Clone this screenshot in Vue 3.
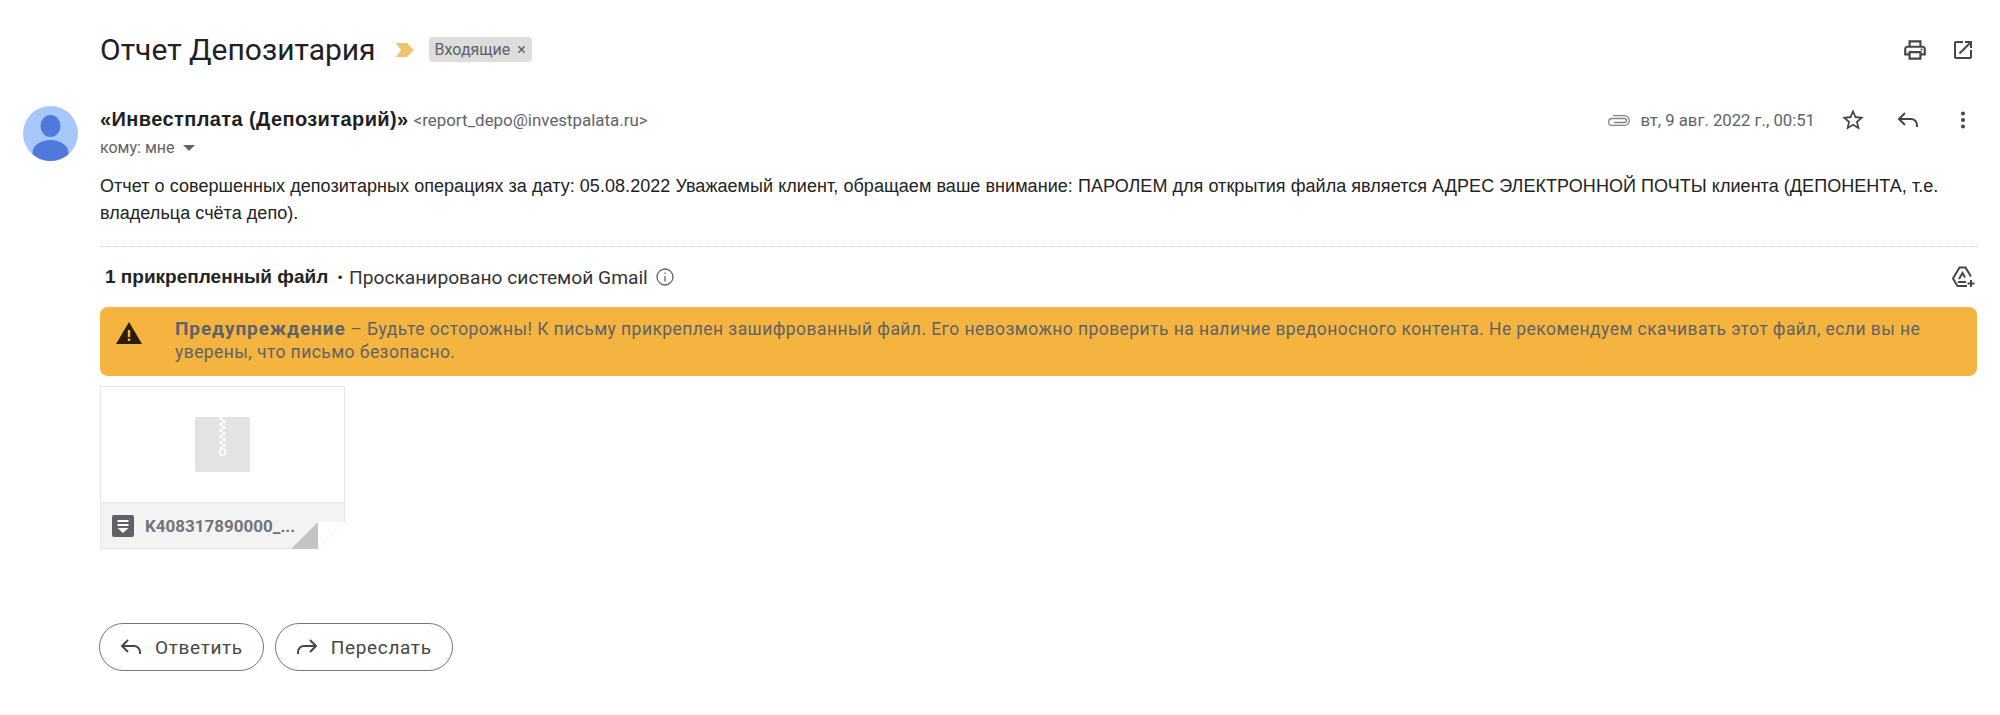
<script setup>
const emailBody = 'Отчет о совершенных депозитарных операциях за дату: 05.08.2022 Уважаемый клиент, обращаем ваше внимание: ПАРОЛЕМ для открытия файла является АДРЕС ЭЛЕКТРОННОЙ ПОЧТЫ клиента (ДЕПОНЕНТА, т.е. владельца счёта депо).'
const warning = ' – Будьте осторожны! К письму прикреплен зашифрованный файл. Его невозможно проверить на наличие вредоносного контента. Не рекомендуем скачивать этот файл, если вы не уверены, что письмо безопасно.'
</script>

<template>
  <div class="page">
    <div class="subjectRow">
      <h1 class="subject">Отчет Депозитария</h1>
      <svg class="marker" width="18" height="14" viewBox="0 0 18 14"><path d="M0 0h11l7 7-7 7H0l5-7z" fill="#f0c36d"/></svg>
      <span class="label">Входящие <span class="labelX">×</span></span>
      <div class="subjectIcons">
        <svg class="icon" width="26" height="26" viewBox="0 0 24 24"><path d="M19 8h-1V3H6v5H5c-1.66 0-3 1.34-3 3v6h4v4h12v-4h4v-6c0-1.66-1.34-3-3-3zM8 5h8v3H8V5zm8 12v2H8v-4h8v2zm2-2v-2H6v2H4v-4c0-.55.45-1 1-1h14c.55 0 1 .45 1 1v4h-2z"/><circle cx="18" cy="11.5" r="1"/></svg>
        <svg class="icon" width="24" height="24" viewBox="0 0 24 24"><path d="M19 19H5V5h7V3H5c-1.11 0-2 .9-2 2v14c0 1.1.89 2 2 2h14c1.1 0 2-.9 2-2v-7h-2v7zM14 3v2h3.59l-9.83 9.83 1.41 1.41L19 6.41V10h2V3h-7z"/></svg>
      </div>
    </div>

    <div class="message">
      <svg class="avatar" width="55" height="55" viewBox="0 0 55 55">
        <defs><clipPath id="avatarClip"><circle cx="27.5" cy="27.5" r="27.5"/></clipPath></defs>
        <circle cx="27.5" cy="27.5" r="27.5" fill="#a8c7fa"/>
        <g clip-path="url(#avatarClip)" fill="#4f79db">
          <ellipse cx="27.5" cy="20" rx="10" ry="11"/>
          <ellipse cx="27.5" cy="47" rx="18" ry="13"/>
        </g>
      </svg>
      <div class="messageMain">
        <div class="senderRow">
          <div class="senderInfo">
            <div class="senderLine"><b class="senderName">«Инвестплата (Депозитарий)»</b> <span class="senderMail">&lt;report_depo@investpalata.ru&gt;</span></div>
            <div class="toLine">кому: мне <span class="caret"></span></div>
          </div>
          <div class="meta">
            <svg class="clip" width="24" height="13" viewBox="0 0 24 13" fill="none" stroke="#80868b" stroke-width="1.300"><path d="M8 8.500h10.500a2 2 0 0 0 0-4H6a3.200 3.200 0 0 0 0 6.800h12.500a4.800 4.800 0 0 0 0-9.600H7"/></svg>
            <span class="date">вт, 9 авг. 2022 г., 00:51</span>
            <svg class="icon star" width="26" height="26" viewBox="0 0 24 24"><path d="M22 9.240l-7.190-.62L12 2 9.190 8.630 2 9.240l5.460 4.730L5.820 21 12 17.270 18.180 21l-1.630-7.030L22 9.240zM12 15.400l-3.760 2.270 1-4.280-3.320-2.880 4.380-.38L12 6.100l1.710 4.040 4.380.38-3.320 2.880 1 4.280L12 15.400z"/></svg>
            <svg class="replyIcon" width="22" height="16" viewBox="0 0 22 16" fill="none" stroke="#444746" stroke-width="2"><path d="M8 1L2 7l6 6M2 7h12a6 6 0 0 1 6 6v2"/></svg>
            <svg class="dots" width="6" height="18" viewBox="0 0 6 18" fill="#444746"><circle cx="3" cy="2.500" r="2"/><circle cx="3" cy="9" r="2"/><circle cx="3" cy="15.500" r="2"/></svg>
          </div>
        </div>
        <p class="body">{{ emailBody }}</p>
      </div>
    </div>

    <div class="attachments">
      <div class="attachHead">
        <span class="attachTitle">1 прикрепленный файл</span>
        <span class="attachDot">•</span>
        <span class="scanned">Просканировано системой Gmail</span>
        <svg class="info" width="20" height="20" viewBox="0 0 20 20" fill="none" stroke="#5f6368" stroke-width="1.300"><circle cx="10" cy="10" r="8"/><path d="M10 9v5.500"/><path d="M10 5.600v1.500"/></svg>
        <svg class="driveAdd" width="26" height="24" viewBox="0 0 26 24" fill="none" stroke="#444746" stroke-width="2"><path d="M16 21H6.500L2 13.500 8.500 2.500h6L20 11.500"/><path d="M7 17h8M8 14l3.500-6 2.500 4.500"/><path d="M20 15v7M16.500 18.500h7"/></svg>
      </div>

      <div class="warning">
        <svg class="warnIcon" width="26" height="22" viewBox="0 0 26 22"><path d="M13 0l13 22H0z" fill="#2b1d05"/><path d="M11.800 8h2.400v7h-2.400zM11.800 16.500h2.400V19h-2.400z" fill="#f4b43f"/></svg>
        <div class="warnText"><b>Предупреждение</b>{{ warning }}</div>
      </div>

      <div class="fileCard">
        <div class="filePreview">
          <svg width="55" height="55" viewBox="0 0 55 55">
            <rect width="55" height="55" rx="2" fill="#e3e3e3"/>
            <path d="M26 0v32" stroke="#fff" stroke-width="3" stroke-dasharray="3 3"/>
            <path d="M29 3v29" stroke="#fff" stroke-width="3" stroke-dasharray="3 3"/>
            <circle cx="27.500" cy="35" r="3" fill="none" stroke="#fff" stroke-width="1.500"/>
          </svg>
        </div>
        <div class="fileFooter">
          <svg class="fileIcon" width="22" height="22" viewBox="0 0 22 22">
            <rect width="22" height="22" rx="2" fill="#5f6368"/>
            <path d="M5.500 5h11v2h-11zM5.500 9h11v2h-11z" fill="#fff"/>
            <path d="M5.500 13h11L11 18z" fill="#fff"/>
          </svg>
          <span class="fileName">K408317890000_...</span>
        </div>
        <svg class="fold" width="54" height="27" viewBox="0 0 54 27">
          <path d="M0 27L27 0v27z" fill="#c4c4c4"/>
          <path d="M27 0h27v27H27z" fill="#fff"/>
          <path d="M54 0L27 27" stroke="#efefef" stroke-width="1"/>
        </svg>
      </div>
    </div>

    <div class="actions">
      <button class="actionBtn">
        <svg width="22" height="16" viewBox="0 0 22 16" fill="none" stroke="#444746" stroke-width="2"><path d="M8 1L2 7l6 6M2 7h12a6 6 0 0 1 6 6v2"/></svg>
        Ответить
      </button>
      <button class="actionBtn">
        <svg width="22" height="16" viewBox="0 0 22 16" fill="none" stroke="#444746" stroke-width="2"><path d="M14 1l6 6-6 6M20 7H8a6 6 0 0 0-6 6v2"/></svg>
        Переслать
      </button>
    </div>
  </div>
</template>

<style scoped>
.page {
  width: 2000px;
  height: 715px;
  box-sizing: border-box;
  padding: 30px 23px 0 23px;
  font-family: Roboto, "Liberation Sans", sans-serif;
  color: #222;
  background: #fff;
  overflow: hidden;
}
.subjectRow {
  display: flex;
  align-items: center;
  height: 39px;
  padding-left: 77px;
}
.subject {
  margin: 0;
  font-size: 30px;
  font-weight: 400;
  color: #202124;
}
.marker {
  margin-left: 20px;
}
.label {
  margin-left: 15px;
  height: 25px;
  line-height: 25px;
  padding: 0 6px;
  background: #dddddd;
  border-radius: 4px;
  font-size: 16px;
  color: #5f6368;
}
.labelX {
  margin-left: 3px;
}
.subjectIcons {
  margin-left: auto;
  display: flex;
  align-items: center;
  gap: 23px;
  padding-right: 2px;
}
.icon {
  fill: #444746;
  display: block;
}
.message {
  display: flex;
  margin-top: 37px;
}
.avatar {
  flex: none;
  margin-right: 22px;
}
.messageMain {
  flex: 1;
}
.senderRow {
  display: flex;
  justify-content: space-between;
}
.senderLine {
  height: 28px;
  line-height: 28px;
  font-size: 16px;
}
.senderName {
  font-family: "Liberation Sans", sans-serif;
  font-size: 20px;
  font-weight: 700;
  letter-spacing: 0.4px;
  line-height: 1;
  color: #1f1f1f;
}
.senderMail {
  margin-left: 1px;
  font-size: 16.900px;
  color: #5f6368;
}
.toLine {
  line-height: 28px;
  font-size: 16px;
  color: #5f6368;
}
.caret {
  display: inline-block;
  width: 0;
  height: 0;
  margin-left: 5px;
  margin-bottom: 2px;
  border-left: 6px solid transparent;
  border-right: 6px solid transparent;
  border-top: 6px solid #5f6368;
}
.meta {
  display: flex;
  align-items: center;
  height: 28px;
  color: #5f6368;
  font-size: 16.700px;
}
.date {
  margin-left: 10px;
}
.star {
  margin-left: 25px;
}
.replyIcon {
  margin-left: 31px;
}
.dots {
  margin-left: 41px;
  margin-right: 11px;
}
.body {
  margin: 11px 0 0;
  font-family: "Liberation Sans", sans-serif;
  font-size: 18px;
  letter-spacing: 0.05px;
  line-height: 27px;
  color: #222;
}
.attachments {
  margin: 19px 0 0 77px;
  border-top: 1px dotted #c8c8c8;
}
.attachHead {
  display: flex;
  align-items: center;
  height: 60px;
  font-size: 19.200px;
  padding-left: 5px;
}
.attachTitle {
  font-family: "Liberation Sans", sans-serif;
  font-weight: 700;
  font-size: 19px;
  color: #222;
}
.attachDot {
  margin: 0 6px 0 9px;
  font-size: 17px;
}
.scanned {
  color: #333;
}
.info {
  margin-left: 7px;
}
.driveAdd {
  margin-left: auto;
}
.warning {
  display: flex;
  height: 69px;
  box-sizing: border-box;
  padding: 11px 20px 0 16px;
  background: #f4b43f;
  border-radius: 8px;
}
.warnIcon {
  flex: none;
  margin-top: 4px;
  margin-right: 33px;
}
.warnText {
  font-size: 17.500px;
  line-height: 23px;
  letter-spacing: 0.43px;
  color: #5f6368;
}
.warnText b {
  font-size: 19px;
  line-height: 1;
  font-weight: 700;
  letter-spacing: 0.9px;
}
.fileCard {
  position: relative;
  width: 245px;
  height: 163px;
  box-sizing: border-box;
  margin-top: 10px;
  border: 1px solid #e6e6e6;
}
.filePreview {
  height: 116px;
  box-sizing: border-box;
  padding-top: 30px;
  display: flex;
  justify-content: center;
  border-bottom: 1px solid #e6e6e6;
}
.fileFooter {
  height: 45px;
  background: #f3f3f3;
  display: flex;
  align-items: center;
  padding-left: 11px;
}
.fileName {
  margin-left: 11px;
  font-size: 17px;
  font-weight: 700;
  color: #70757a;
}
.fold {
  position: absolute;
  right: -1px;
  bottom: -1px;
  display: block;
}
.actions {
  display: flex;
  gap: 11px;
  margin: 74px 0 0 76px;
}
.actionBtn {
  display: flex;
  align-items: center;
  gap: 13px;
  height: 48px;
  padding: 0 20px 0 20px;
  background: #fff;
  border: 1px solid #747775;
  border-radius: 24px;
  font-family: Roboto, "Liberation Sans", sans-serif;
  font-size: 19px;
  letter-spacing: 0.65px;
  color: #444746;
}
</style>
